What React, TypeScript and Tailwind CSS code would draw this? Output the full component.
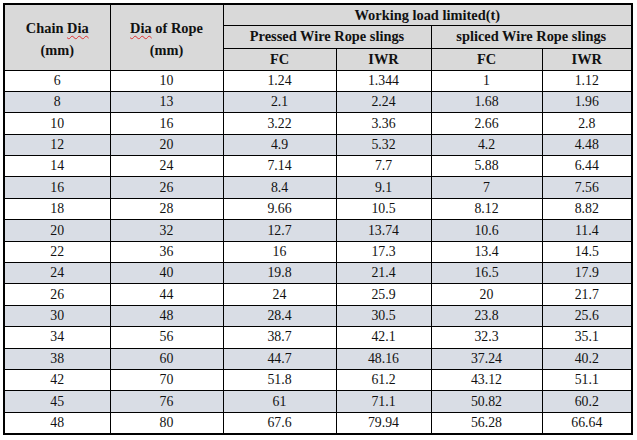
import React from 'react';

const rows: [string, string, string, string, string, string][] = [
  ['6', '10', '1.24', '1.344', '1', '1.12'],
  ['8', '13', '2.1', '2.24', '1.68', '1.96'],
  ['10', '16', '3.22', '3.36', '2.66', '2.8'],
  ['12', '20', '4.9', '5.32', '4.2', '4.48'],
  ['14', '24', '7.14', '7.7', '5.88', '6.44'],
  ['16', '26', '8.4', '9.1', '7', '7.56'],
  ['18', '28', '9.66', '10.5', '8.12', '8.82'],
  ['20', '32', '12.7', '13.74', '10.6', '11.4'],
  ['22', '36', '16', '17.3', '13.4', '14.5'],
  ['24', '40', '19.8', '21.4', '16.5', '17.9'],
  ['26', '44', '24', '25.9', '20', '21.7'],
  ['30', '48', '28.4', '30.5', '23.8', '25.6'],
  ['34', '56', '38.7', '42.1', '32.3', '35.1'],
  ['38', '60', '44.7', '48.16', '37.24', '40.2'],
  ['42', '70', '51.8', '61.2', '43.12', '51.1'],
  ['45', '76', '61', '71.1', '50.82', '60.2'],
  ['48', '80', '67.6', '79.94', '56.28', '66.64'],
];

// red spellcheck squiggle under "Dia"
const Squiggle: React.FC<{ children: React.ReactNode }> = ({ children }) => (
  <span className="underline decoration-wavy decoration-[#e03030] decoration-1 underline-offset-2">
    {children}
  </span>
);

const th = 'border border-black bg-[#d9d9d9] p-0 font-bold text-center text-[14.4px]';
const td = 'border border-black p-0 text-center font-normal text-[13.8px]';

export default function App() {
  return (
    <div className="w-[637px] h-[440px] bg-white pt-[3px] pl-[3px] font-['Liberation_Serif',serif] leading-none text-[#111]">
      <table className="table-fixed border-collapse border-2 border-black w-[628px]">
        <colgroup>
          <col className="w-[106px]" />
          <col className="w-[113px]" />
          <col className="w-[113px]" />
          <col className="w-[95px]" />
          <col className="w-[111px]" />
          <col className="w-[90px]" />
        </colgroup>
        <thead>
          <tr className="h-[21px]">
            <th rowSpan={3} className={th}>
              <div className="pt-[3px] leading-[22px]">
                <div>Chain <Squiggle>Dia</Squiggle></div>
                <div>(mm)</div>
              </div>
            </th>
            <th rowSpan={3} className={th}>
              <div className="pt-[3px] leading-[22px]">
                <div><Squiggle>Dia</Squiggle> of Rope</div>
                <div>(mm)</div>
              </div>
            </th>
            <th colSpan={4} className={th}>Working load limited(t)</th>
          </tr>
          <tr className="h-[23px]">
            <th colSpan={2} className={th}>Pressed Wire Rope slings</th>
            <th colSpan={2} className={th}>spliced Wire Rope slings</th>
          </tr>
          <tr className="h-[22px]">
            <th className={th}>FC</th>
            <th className={th}>IWR</th>
            <th className={th}>FC</th>
            <th className={th}>IWR</th>
          </tr>
        </thead>
        <tbody>
          {rows.map((r, i) => (
            <tr key={r[0]} className={`h-[21.4px] ${i % 2 === 1 ? 'bg-[#d9dde5]' : 'bg-white'}`}>
              {r.map((c, j) => (
                <td key={j} className={td}>{c}</td>
              ))}
            </tr>
          ))}
        </tbody>
      </table>
    </div>
  );
}
